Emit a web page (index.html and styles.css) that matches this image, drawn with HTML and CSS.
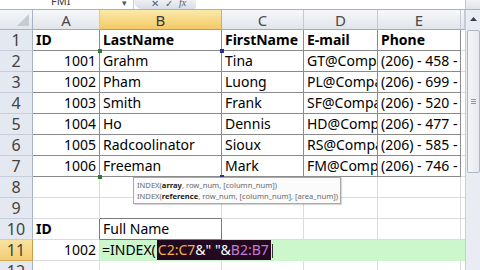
FILE: index.html
```html
<!DOCTYPE html>
<html>
<head>
<meta charset="utf-8">
<link rel="stylesheet" href="styles.css">
</head>
<body>
<div class="app">
  <div class="fbar">
    <div class="namebox"><span class="nb-text">FMI</span><span class="nb-arrow">▾</span></div>
    <div class="fx-tools"><span>✕</span><span>✓</span><span class="fx">fx</span></div>
    <div class="fx-input"></div>
    <div class="fb-right"></div>
  </div>
  <div class="main">
    <div class="sheet">
      <div class="row hdr">
        <div class="c corner"><svg width="14" height="14" viewBox="0 0 14 14"><path d="M13 1 L13 13 L1 13 Z" fill="#c6ccd6"/></svg></div>
        <div class="c ch">A</div>
        <div class="c ch sel">B</div>
        <div class="c ch">C</div>
        <div class="c ch">D</div>
        <div class="c ch">E</div>
        <div class="c ch"></div>
      </div>
      <div class="row t">
        <div class="c rh">1</div>
        <div class="c b">ID</div>
        <div class="c b">LastName</div>
        <div class="c b">FirstName</div>
        <div class="c b">E-mail</div>
        <div class="c b">Phone</div>
        <div class="c"></div>
      </div>
      <div class="row t r">
        <div class="c rh">2</div>
        <div class="c n">1001</div>
        <div class="c">Grahm</div>
        <div class="c">Tina</div>
        <div class="c">GT@Company.com</div>
        <div class="c">(206) - 458 - 2231</div>
        <div class="c"></div>
      </div>
      <div class="row t r">
        <div class="c rh">3</div>
        <div class="c n">1002</div>
        <div class="c">Pham</div>
        <div class="c">Luong</div>
        <div class="c">PL@Company.com</div>
        <div class="c">(206) - 699 - 4512</div>
        <div class="c"></div>
      </div>
      <div class="row t r">
        <div class="c rh">4</div>
        <div class="c n">1003</div>
        <div class="c">Smith</div>
        <div class="c">Frank</div>
        <div class="c">SF@Company.com</div>
        <div class="c">(206) - 520 - 7781</div>
        <div class="c"></div>
      </div>
      <div class="row t r">
        <div class="c rh">5</div>
        <div class="c n">1004</div>
        <div class="c">Ho</div>
        <div class="c">Dennis</div>
        <div class="c">HD@Company.com</div>
        <div class="c">(206) - 477 - 1290</div>
        <div class="c"></div>
      </div>
      <div class="row t r">
        <div class="c rh">6</div>
        <div class="c n">1005</div>
        <div class="c">Radcoolinator</div>
        <div class="c">Sioux</div>
        <div class="c">RS@Company.com</div>
        <div class="c">(206) - 585 - 3346</div>
        <div class="c"></div>
      </div>
      <div class="row t r">
        <div class="c rh">7</div>
        <div class="c n">1006</div>
        <div class="c">Freeman</div>
        <div class="c">Mark</div>
        <div class="c">FM@Company.com</div>
        <div class="c">(206) - 746 - 9902</div>
        <div class="c"></div>
      </div>
      <div class="row">
        <div class="c rh">8</div>
        <div class="c"></div><div class="c"></div><div class="c"></div><div class="c"></div><div class="c"></div><div class="c"></div>
      </div>
      <div class="row">
        <div class="c rh">9</div>
        <div class="c"></div><div class="c boxtop"></div><div class="c"></div><div class="c"></div><div class="c"></div><div class="c"></div>
      </div>
      <div class="row">
        <div class="c rh">10</div>
        <div class="c b boxleft">ID</div>
        <div class="c box">Full Name</div>
        <div class="c"></div><div class="c"></div><div class="c"></div><div class="c"></div>
      </div>
      <div class="row">
        <div class="c rh act">11</div>
        <div class="c n">1002</div>
        <div class="c edit">=INDEX(<span class="hl"><span class="ro">C2:C7</span>&amp;" "&amp;<span class="rp">B2:B7</span></span><span class="caret"></span></div>
      </div>
      <div class="row">
        <div class="c rh">12</div>
        <div class="c"></div><div class="c"></div><div class="c"></div><div class="c"></div><div class="c"></div><div class="c"></div>
      </div>

      <span class="dot g d1"></span>
      <span class="dot g d2"></span>
      <span class="dot bl d3"></span>
      <span class="dot bl d4"></span>

      <div class="tip">
        <div>INDEX(<b>array</b>, row_num, [column_num])</div>
        <div>INDEX(<b>reference</b>, row_num, [column_num], [area_num])</div>
      </div>
    </div>
    <div class="vscroll">
      <div class="vs-up"><svg width="7" height="4" viewBox="0 0 7 4"><path d="M0 4 L3.5 0 L7 4 Z" fill="#3a3f4a"/></svg></div>
      <div class="vs-thumb"><span></span><span></span><span></span></div>
    </div>
  </div>
</div>
</body>
</html>
```

FILE: styles.css
```css
* { box-sizing: border-box; }
body {
  margin: 0;
  width: 480px;
  height: 270px;
  overflow: hidden;
  background: #fff;
  font-family: "Noto Sans", "Open Sans", sans-serif;
}
.app { width: 480px; height: 270px; display: flex; flex-direction: column; }

/* formula bar remnant */
.fbar {
  height: 10px;
  display: flex;
  overflow: hidden;
  border-bottom: 1px solid #a9b1bf;
  background: #fff;
}
.namebox {
  width: 134px;
  display: flex;
  align-items: flex-end;
  background: #fff;
  border-right: 1px solid #c7ccd5;
}
.nb-text {
  font-size: 11px;
  line-height: 11px;
  margin-bottom: 3px;
  margin-left: 51px;
  color: #3c3c3c;
}
.nb-arrow {
  font-size: 9px;
  line-height: 9px;
  margin-left: 52px;
  margin-bottom: 2px;
  color: #555;
}
.fx-tools {
  width: 62px;
  display: flex;
  align-items: flex-end;
  gap: 6px;
  padding-left: 17px;
  background: linear-gradient(#eef0f4, #d9dde4);
  border-bottom-left-radius: 8px;
  border-bottom-right-radius: 2px;
  color: #5a5f68;
  font-size: 10px;
  line-height: 10px;
}
.fx-tools span { margin-bottom: 1px; }
.fx-tools .fx { font-style: italic; font-family: "Liberation Serif", serif; }
.fx-input { flex: 1; background: #fff; }
.fb-right {
  width: 15px;
  background: linear-gradient(#f1f2f5, #dfe3ea);
  border-left: 1px solid #c3c9d4;
}

.main { display: flex; height: 260px; }
.sheet {
  position: relative;
  width: 465px;
  height: 260px;
  overflow: hidden;
}

.row {
  display: grid;
  grid-template-columns: 33px 67px 122px 82px 74px 83px 4px;
  height: 21px;
}
.row.hdr { height: 20px; }

.c {
  display: flex;
  align-items: flex-end;
  padding: 0 3px 1px;
  border-right: 1px solid #dadcdf;
  border-bottom: 1px solid #dadcdf;
  overflow: hidden;
  white-space: nowrap;
  font-size: 14px;
  line-height: 18px;
  color: #000;
}
.c.n { justify-content: flex-end; }
.c.b { font-weight: bold; }

/* headers */
.corner {
  background: linear-gradient(#f4f6f9, #e2e6ec);
  border-right: 1px solid #a7b3c6;
  border-bottom: 1px solid #a7b3c6;
  justify-content: flex-end;
  align-items: flex-end;
  padding: 0 2px 2px 0;
}
.ch {
  justify-content: center;
  align-items: center;
  padding: 0;
  background: linear-gradient(#f7f8fa, #e1e5eb);
  border-right: 1px solid #c3cad6;
  border-bottom: 1px solid #9ea9ba;
  color: #4a4a4a;
  font-size: 15px;
  line-height: 20px;
}
.ch.sel {
  background: linear-gradient(#fbeaa8, #f3c969);
  border-right: 1px solid #d8ae52;
  border-bottom: 1px solid #c49a45;
  color: #3a3a3a;
}
.rh {
  justify-content: center;
  padding: 0;
  background: #e4e9f1;
  border-right: 1px solid #a7b3c6;
  border-bottom: 1px solid #c6cedb;
  color: #424242;
  font-size: 16px;
  line-height: 20px;
}
.rh.act {
  background: linear-gradient(#f9e3a0, #f3cc72);
  border-bottom: 1px solid #d6aa50;
  border-right: 1px solid #c99b45;
}

/* table rows 1-7 */
.t .c:not(.rh):not(:last-child) {
  border-bottom-color: #8a8a8a;
  border-right-color: #8a8a8a;
}
.r .c:nth-child(2) { border-right-color: #3e7a3e; }
.r .c:nth-child(3) { border-right-color: #4c4ca8; }
.r .c:nth-child(4) { border-right-color: #7a6cc0; }

/* full name box */
.boxtop { border-bottom-color: #7a7a7a; }
.boxleft { border-right-color: #7a7a7a; }
.box { border-right-color: #7a7a7a; border-bottom-color: #7a7a7a; }

/* editing row */
.edit {
  grid-column: 3 / -1;
  background: #ccf6cc;
  border: none;
  padding: 0 0 0 2px;
  align-items: stretch;
  line-height: 20px;
  overflow: visible;
}
.edit .hl {
  display: inline-block;
  background: #23091f;
  color: #fff;
  padding: 0 2px 0 1px;
  height: 20px;
  margin-left: 1px;
}
.ro { color: #efb14a; }
.rp { color: #c77ad6; }
.caret {
  display: inline-block;
  width: 1px;
  height: 14px;
  margin-top: 4px;
  background: #333;
  margin-left: 1px;
}

/* range corner dots */
.dot {
  position: absolute;
  width: 4px;
  height: 4px;
}
.dot.g { background: #2e7a2e; }
.dot.bl { background: #2d2d9a; }
.d1 { left: 98px; top: 39px; }
.d2 { left: 98px; top: 165px; }
.d3 { left: 220px; top: 39px; }
.d4 { left: 220px; top: 165px; }

/* tooltip */
.tip {
  position: absolute;
  left: 133px;
  top: 167px;
  width: 208px;
  height: 27px;
  background: #fbfbfb;
  border: 1px solid #a9a9a9;
  box-shadow: 1px 1px 1px rgba(0,0,0,0.15);
  padding: 2px 3px;
  font-size: 7.6px;
  line-height: 11px;
  color: #6a6a6a;
  white-space: nowrap;
  overflow: hidden;
}
.tip b { color: #222; }

/* vertical scrollbar */
.vscroll {
  width: 15px;
  height: 260px;
  background: #e9ecf3;
  border-left: 1px solid #c7cdd9;
  display: flex;
  flex-direction: column;
  align-items: center;
}
.vs-up {
  width: 14px;
  height: 18px;
  display: flex;
  align-items: center;
  justify-content: center;
}
.vs-thumb {
  margin-top: 2px;
  width: 13px;
  height: 143px;
  background: linear-gradient(90deg, #f4f5f8, #e6e9ef);
  border: 1px solid #aeb6c5;
  border-radius: 2px;
  display: flex;
  flex-direction: column;
  align-items: center;
  justify-content: center;
  gap: 1px;
}
.vs-thumb span {
  width: 5px;
  height: 1px;
  background: #8e96a6;
}
```
